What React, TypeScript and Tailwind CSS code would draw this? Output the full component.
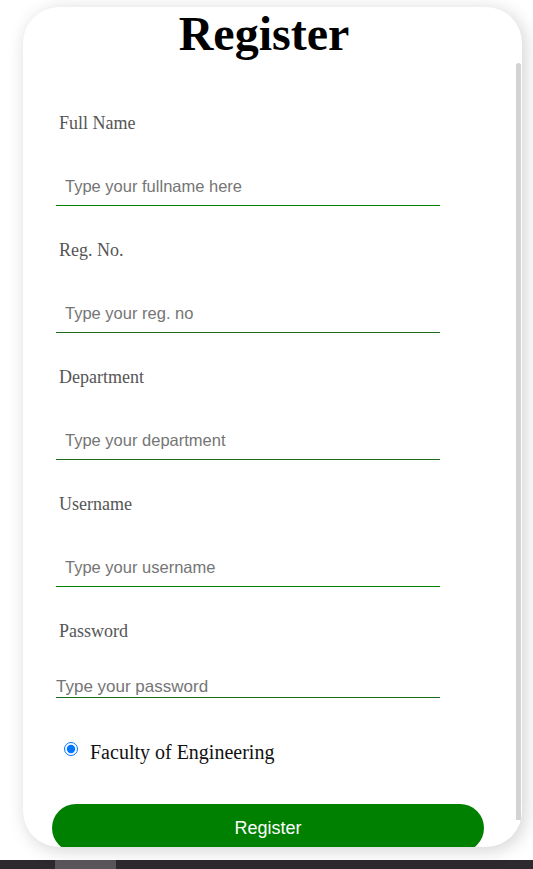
import { useState } from "react";

type Field = {
  label: string;
  placeholder: string;
  line: string;
};

const fields: Field[] = [
  { label: "Full Name", placeholder: "Type your fullname here", line: "border-[#008000]" },
  { label: "Reg. No.", placeholder: "Type your reg. no", line: "border-[#1b6d1b]" },
  { label: "Department", placeholder: "Type your department", line: "border-[#1b6d1b]" },
  { label: "Username", placeholder: "Type your username", line: "border-[#008000]" },
];

const serif = "font-['Liberation_Serif','Times_New_Roman',serif]";
const sans = "font-['Liberation_Sans',Arial,sans-serif]";

export default function App() {
  const [faculty, setFaculty] = useState(true);

  return (
    <div className="relative flex h-[869px] w-full flex-col overflow-hidden bg-white">
      {/* card */}
      <div className="relative ml-[23px] mt-[7px] h-[840px] w-[499px] overflow-hidden rounded-[36px] bg-white shadow-[3px_3px_18px_rgba(0,0,0,0.18)]">
        <h1
          className={`${serif} pr-[17px] text-center text-[48px] font-bold leading-[53px] text-black`}
        >
          Register
        </h1>

        <form className="ml-[33px] mt-[53px] flex w-[384px] flex-col gap-[34px]">
          {fields.map((f) => (
            <div key={f.label} className="flex flex-col">
              <label className={`${serif} pl-[3px] text-[18px] leading-[21px] text-[#555555]`}>
                {f.label}
              </label>
              <input
                type="text"
                placeholder={f.placeholder}
                className={`${sans} mt-[33px] h-[39px] w-full border-b px-[9px] text-[16.5px] text-black outline-none placeholder:text-[#757575] ${f.line}`}
              />
            </div>
          ))}

          {/* password has no padding */}
          <div className="flex flex-col">
            <label className={`${serif} pl-[3px] text-[18px] leading-[21px] text-[#555555]`}>
              Password
            </label>
            <input
              type="password"
              placeholder="Type your password"
              className={`${sans} mt-[35px] h-[21px] w-full border-b border-[#1b6d1b] p-0 text-[17px] leading-[20px] text-black outline-none placeholder:text-[#757575]`}
            />
          </div>
        </form>

        <div className="ml-[41px] mt-[43px] flex items-start">
          <input
            type="radio"
            checked={faculty}
            onChange={() => setFaculty(true)}
            className="m-0 mt-[1px] h-[14px] w-[14px] accent-[#0075ff]"
          />
          <span className={`${serif} ml-[12px] text-[20px] leading-[23px] text-[#111111]`}>
            Faculty of Engineering
          </span>
        </div>

        <button
          type="button"
          className={`${sans} ml-[29px] mt-[40px] h-[48px] w-[432px] rounded-full bg-[#008000] text-[18px] text-white`}
        >
          Register
        </button>

        {/* scrollbar */}
        <div className="absolute right-[1px] top-[56px] h-[757px] w-[5px] rounded-t-full bg-[#d3d3d3]" />
      </div>

      {/* bottom bar */}
      <div className="mt-auto flex h-[9px] w-full bg-[#2c2a2e]">
        <div className="ml-[55px] h-full w-[61px] bg-[#58565a]" />
      </div>
    </div>
  );
}
